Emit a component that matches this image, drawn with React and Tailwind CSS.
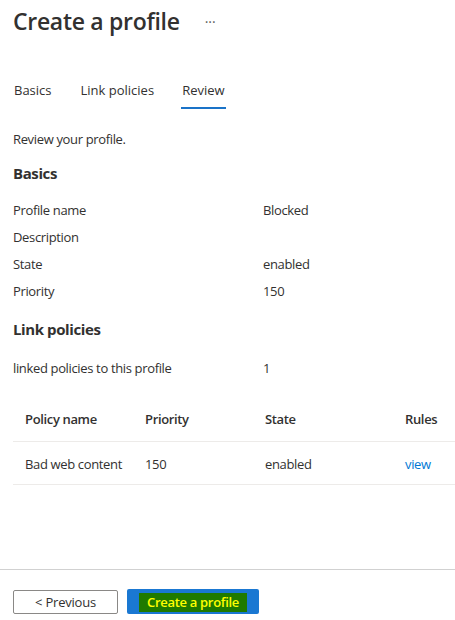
import React from "react";

const font = { fontFamily: '"Open Sans", "Noto Sans", sans-serif' };

function Row({ label, value }) {
  return (
    <div className="flex h-[27px] items-center text-[13px] tracking-[-0.35px] text-[#323130]">
      <div className="w-[250px]">{label}</div>
      <div>{value}</div>
    </div>
  );
}

export default function App() {
  return (
    <div className="flex h-[620px] w-[455px] flex-col overflow-hidden bg-white text-[#323130]" style={font}>
      <div className="flex-1 px-[13px]">
        <div className="flex items-center pt-[5px]">
          <h1 className="text-[23px] font-semibold leading-[32px] tracking-[-0.3px]">Create a profile</h1>
          <span className="ml-[25px] mt-[2px] text-[14px] leading-none text-[#605e5c]">···</span>
        </div>

        <div className="mt-[44px] flex text-[13px]">
          <div className="pb-[8px] pl-[1px] pr-[29px]">Basics</div>
          <div className="pb-[8px] pr-[27px]">Link policies</div>
          <div className="border-b-2 border-[#1a73c8] px-[1px] pb-[6px]">Review</div>
        </div>

        <div className="mt-[21px] text-[13px] leading-[18px] tracking-[-0.35px]">Review your profile.</div>

        <div className="mt-[15px] text-[15px] font-bold leading-[20px] tracking-[-0.4px]">Basics</div>

        <div className="mt-[15px]">
          <Row label="Profile name" value="Blocked" />
          <Row label="Description" value="" />
          <Row label="State" value="enabled" />
          <Row label="Priority" value="150" />
        </div>

        <div className="mt-[13px] text-[15px] font-bold leading-[20px] tracking-[-0.4px]">Link policies</div>

        <div className="mt-[17px]">
          <Row label="linked policies to this profile" value="1" />
        </div>

        <div className="mt-[12px] -mr-[13px] text-[13px] leading-[18px] tracking-[-0.35px]">
          <div className="flex h-[47px] items-start border-b border-[#edebe9] pt-[15px] font-semibold">
            <div className="w-[132px] pl-[12px]">Policy name</div>
            <div className="w-[120px]">Priority</div>
            <div className="w-[140px]">State</div>
            <div>Rules</div>
          </div>
          <div className="flex h-[43px] items-start border-b border-[#edebe9] pt-[13px]">
            <div className="w-[132px] pl-[12px]">Bad web content</div>
            <div className="w-[120px]">150</div>
            <div className="w-[140px]">enabled</div>
            <div className="text-[#0078d4]">view</div>
          </div>
        </div>
      </div>

      <div className="flex h-[51px] items-start gap-[9px] border-t border-[#d1d1d1] px-[13px] pt-[20px]">
        <button className="flex h-[24px] w-[105px] items-center justify-center rounded-[2px] border border-[#8a8886] bg-white pt-[2px] text-[13px] tracking-[-0.2px] text-[#323130]">
          &lt; Previous
        </button>
        <button className="-mt-[1px] flex h-[25px] w-[132px] items-center justify-center rounded-[2px] bg-[#1a78d2] pt-[2px] text-[13px]">
          <span className="bg-[#1f7a00] px-[8px] font-semibold leading-[19px] tracking-[-0.3px] text-[#ffff00]">Create a profile</span>
        </button>
      </div>
    </div>
  );
}
